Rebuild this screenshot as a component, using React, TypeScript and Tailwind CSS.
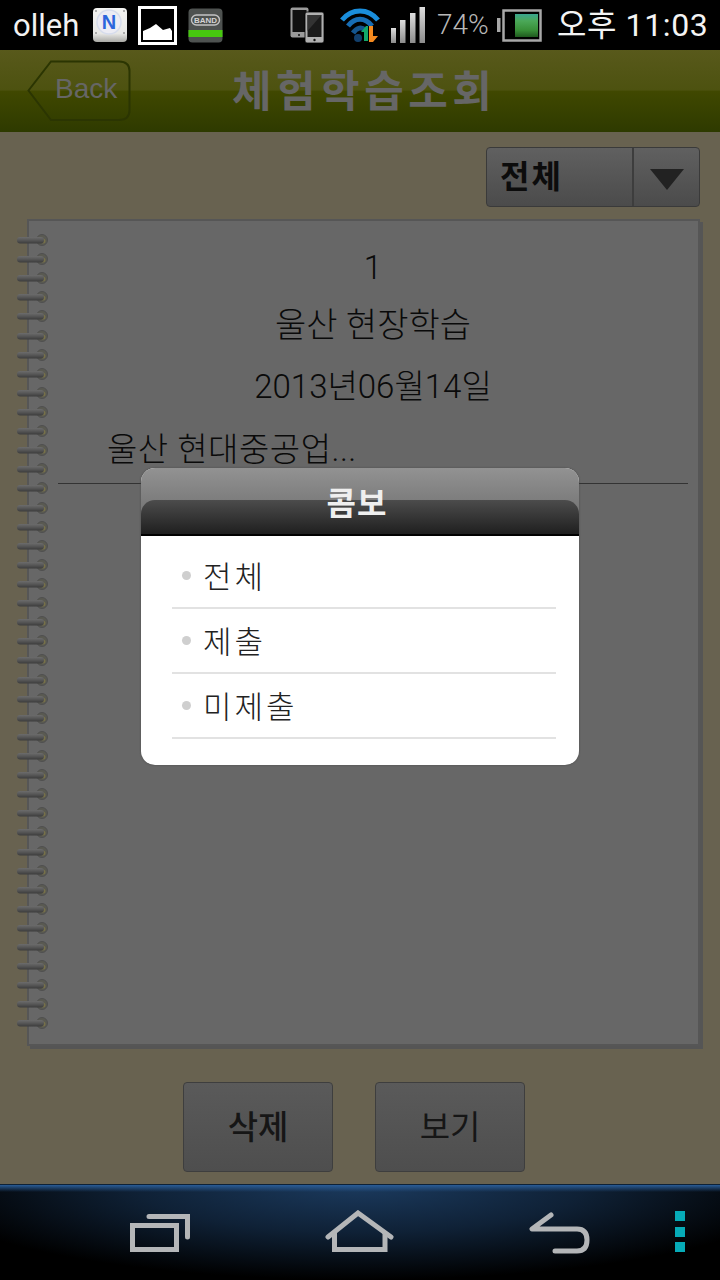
const rings = Array.from({ length: 42 }, (_, i) => i);
const comboItems = ["전체", "제출", "미제출"];

function NaverIcon() {
  return (
    <svg width="36" height="36" viewBox="0 0 36 36" className="shrink-0">
      <defs>
        <linearGradient id="nbg" x1="0" y1="0" x2="0" y2="1">
          <stop offset="0" stopColor="#f4f4f2" />
          <stop offset="0.75" stopColor="#e8e8e6" />
          <stop offset="1" stopColor="#a8a8a4" />
        </linearGradient>
      </defs>
      <rect x="1" y="1" width="34" height="34" rx="4" fill="url(#nbg)" />
      <circle cx="17" cy="15" r="12" fill="#ececf4" stroke="#d6dcec" strokeWidth="1.5" />
      <text x="17" y="22" textAnchor="middle" fontSize="20" fontWeight="700" fontFamily="Liberation Sans" fill="#2c66dc">N</text>
      <circle cx="4" cy="4" r="1" fill="#999" />
      <circle cx="32" cy="4" r="1" fill="#999" />
      <circle cx="4" cy="26" r="1" fill="#999" />
      <circle cx="32" cy="26" r="1" fill="#999" />
    </svg>
  );
}

function PictureIcon() {
  return (
    <svg width="39" height="39" viewBox="0 0 39 39" className="shrink-0">
      <rect x="1.5" y="1.5" width="36" height="36" fill="#000" stroke="#fff" strokeWidth="3" />
      <path d="M5 34 V25 L12 22 L18 18 L25 24 L32 22 L34 25 V34 Z" fill="#fff" />
    </svg>
  );
}

function BandIcon() {
  return (
    <svg width="35" height="35" viewBox="0 0 35 35" className="shrink-0">
      <rect x="0.5" y="0.5" width="34" height="34" rx="4" fill="#4e5250" />
      <rect x="3.5" y="7" width="28" height="10" rx="5" fill="none" stroke="#c4c4c4" strokeWidth="1.4" />
      <text x="17.5" y="15" textAnchor="middle" fontSize="8" fontWeight="700" fontFamily="Liberation Sans" fill="#d4d4d4">BAND</text>
      <rect x="0.5" y="22" width="34" height="7" fill="#47c80f" />
    </svg>
  );
}

function PhonesIcon() {
  return (
    <svg width="35" height="37" viewBox="0 0 35 37" className="shrink-0">
      <rect x="0.5" y="0.5" width="18" height="30" rx="2" fill="#9a9a9a" />
      <rect x="2.5" y="3" width="14" height="22" fill="#111" />
      <circle cx="9" cy="28" r="1" fill="#111" />
      <rect x="15" y="5" width="19" height="31" rx="2" fill="#b0b0b0" stroke="#000" strokeWidth="0.8" />
      <rect x="17.5" y="8" width="14" height="22" fill="#1a1a1a" />
      <path d="M17.5 8 H31.5 L17.5 24 Z" fill="#333" />
      <circle cx="24.5" cy="33" r="1.2" fill="#111" />
    </svg>
  );
}

function WifiIcon() {
  return (
    <svg width="40" height="38" viewBox="0 0 40 38" className="shrink-0">
      <path d="M2 14 C12 2 28 2 38 14" fill="none" stroke="#1a8edc" strokeWidth="5" />
      <path d="M8 20 C15 11 25 11 32 20" fill="none" stroke="#176db4" strokeWidth="5" />
      <path d="M13 27 C17 21 22 21 25 24" fill="none" stroke="#14558e" strokeWidth="5" />
      <circle cx="18" cy="32" r="4" fill="#123f6c" />
      <path d="M26 20 L21 26 H24 V35 H28 V20 Z" fill="#12a86a" />
      <path d="M29 20 H33 V30 H38 L33 36 H29 Z" fill="#f58a1f" />
    </svg>
  );
}

function SignalIcon() {
  return (
    <svg width="36" height="37" viewBox="0 0 36 37" className="shrink-0">
      <defs>
        <linearGradient id="sig" x1="0" y1="0" x2="0" y2="1">
          <stop offset="0" stopColor="#dedede" />
          <stop offset="1" stopColor="#8c8c8c" />
        </linearGradient>
      </defs>
      <rect x="1" y="21" width="5" height="15" fill="url(#sig)" />
      <rect x="10" y="13" width="5.5" height="23" fill="url(#sig)" />
      <rect x="20" y="6" width="5.5" height="30" fill="url(#sig)" />
      <rect x="29.5" y="0" width="5.5" height="36" fill="url(#sig)" />
    </svg>
  );
}

function BatteryIcon() {
  return (
    <svg width="45" height="33" viewBox="0 0 45 33" className="shrink-0">
      <defs>
        <linearGradient id="bat" x1="0" y1="0" x2="0" y2="1">
          <stop offset="0" stopColor="#3aa58f" />
          <stop offset="0.3" stopColor="#4ba858" />
          <stop offset="0.7" stopColor="#388f38" />
          <stop offset="1" stopColor="#1f5a1f" />
        </linearGradient>
      </defs>
      <rect x="0" y="9" width="3.5" height="14" fill="#a8a8a8" />
      <rect x="6.5" y="1.5" width="37" height="30" fill="#000" stroke="#a8a8a8" strokeWidth="2.5" />
      <rect x="18" y="5" width="23" height="23" fill="url(#bat)" />
    </svg>
  );
}

function RecentsIcon() {
  return (
    <svg width="64" height="44" viewBox="0 0 64 44" className="shrink-0" fill="none" stroke="#b4b6b8" strokeWidth="5">
      <rect x="4.5" y="15.5" width="44" height="24" />
      <path d="M21 6.5 H59.5 V27" strokeLinecap="round" />
    </svg>
  );
}

function HomeIcon() {
  return (
    <svg width="70" height="44" viewBox="0 0 70 44" className="shrink-0" fill="none" stroke="#b4b6b8" strokeWidth="5">
      <path d="M3 27 L33 3 L66 27" strokeLinecap="round" strokeLinejoin="miter" />
      <path d="M9.5 22 V39.5 H60 V22" />
    </svg>
  );
}

function BackIcon() {
  return (
    <svg width="62" height="44" viewBox="0 0 62 44" className="shrink-0" fill="none" stroke="#b4b6b8" strokeWidth="5" strokeLinecap="round" strokeLinejoin="round">
      <path d="M22 5 L3 19 H48 Q58 19 58 30 Q58 41 48 41 H26" />
    </svg>
  );
}

function Ring() {
  return (
    <svg width="31" height="12" viewBox="0 0 31 12" className="shrink-0">
      <defs>
        <linearGradient id="ring" x1="0" y1="0" x2="0" y2="1">
          <stop offset="0" stopColor="#6c6c6c" />
          <stop offset="0.5" stopColor="#565656" />
          <stop offset="1" stopColor="#3c3c3c" />
        </linearGradient>
      </defs>
      <circle cx="25" cy="6" r="5.5" fill="#5a5a52" stroke="#505050" />
      <circle cx="26" cy="7" r="2.5" fill="#77714a" />
      <rect x="0" y="3" width="27" height="6.5" rx="3.2" fill="url(#ring)" />
    </svg>
  );
}

export default function App() {
  return (
    <div className="w-[720px] h-[1280px] relative overflow-hidden flex flex-col bg-[#686250] font-['Roboto','Noto_Sans_CJK_KR',sans-serif]">
      {/* status bar */}
      <div className="h-[50px] shrink-0 bg-black flex items-center pl-[13px]">
        <span className="w-[67px] text-[31px] leading-none text-[#f2f2f2]">olleh</span>
        <div className="ml-[12px]"><NaverIcon /></div>
        <div className="ml-[10px]"><PictureIcon /></div>
        <div className="ml-[11px]"><BandIcon /></div>
        <div className="ml-[67px]"><PhonesIcon /></div>
        <div className="ml-[15px]"><WifiIcon /></div>
        <div className="ml-[10px]"><SignalIcon /></div>
        <span className="ml-[11px] w-[60px] text-[28px] font-light leading-none text-[#b8b8b8]">74%</span>
        <BatteryIcon />
        <span className="ml-[15px] text-[32px] tracking-[0.6px] leading-none text-[#f4f4f4] whitespace-nowrap">오후 11:03</span>
      </div>

      {/* title bar */}
      <div className="h-[82px] shrink-0 flex items-center pl-[27px] bg-[linear-gradient(to_bottom,#58591b_0%,#4d5210_49%,#404800_50%,#2e3a00_100%)]">
        <div className="relative w-[104px] h-[62px] flex items-center pl-[28px] pb-[4px] text-[28px] text-[#666] font-['Liberation_Sans',sans-serif]">
          <svg width="104" height="62" viewBox="0 0 104 62" className="absolute inset-0" fill="none">
            <path d="M1.5 30.5 L24 1.5 H92 Q102.5 1.5 102.5 11 V50 Q102.5 60 92 60 H24 Z" stroke="#2b3502" strokeWidth="2" />
          </svg>
          Back
        </div>
        <h1 className="ml-[101px] pt-[2px] text-[43px] font-bold leading-none tracking-[4.5px] text-[#666] whitespace-nowrap">체험학습조회</h1>
      </div>

      {/* content */}
      <div className="flex-1 flex flex-col pt-[15px]">
        <div className="self-end mr-[20px] w-[214px] h-[60px] flex rounded-[4px] border border-[#3a3a3a] bg-[linear-gradient(to_bottom,#606060,#4b4b4b)]">
          <div className="w-[147px] flex items-center pl-[13px] text-[32px] font-bold tracking-[2px] text-[#0c0c0c] border-r-2 border-[#3d3d3d]">전체</div>
          <div className="flex-1 flex items-center justify-center pt-[4px]">
            <svg width="36" height="22" viewBox="0 0 36 22"><path d="M1 1 H35 L18 22 Z" fill="#222" /></svg>
          </div>
        </div>

        <div className="relative ml-[27px] mt-[12px] w-[673px] h-[827px] border-2 border-[#565656] bg-[#676767] shadow-[3px_3px_0_#555]">
          <div className="absolute left-[-12px] top-[13px] h-[796px] flex flex-col justify-between">
            {rings.map((i) => (
              <Ring key={i} />
            ))}
          </div>
          <div className="ml-[29px] mr-[10px] pt-[22px] text-[#0a0a0a] font-light border-b border-[#333] h-[263px]">
            <div className="h-[50px] flex items-center justify-center text-[33px]">1</div>
            <div className="h-[60px] flex items-center justify-center pt-[4px] text-[34px]">울산 현장학습</div>
            <div className="h-[66px] flex items-center justify-center pt-[2px] text-[33px]">2013년06월14일</div>
            <div className="h-[62px] flex items-center pl-[49px] text-[33px] tracking-[0.5px]">울산 현대중공업...</div>
          </div>
        </div>

        <div className="flex gap-[42px] pl-[183px] mt-[36px]">
          <button className="w-[150px] h-[90px] pt-[2px] rounded-[4px] border border-[#3e3e3e] bg-[linear-gradient(to_bottom,#5a5a5a,#4e4e4e)] text-[33px] font-medium text-[#161616]">삭제</button>
          <button className="w-[150px] h-[90px] pt-[2px] rounded-[4px] border border-[#3e3e3e] bg-[linear-gradient(to_bottom,#5a5a5a,#4e4e4e)] text-[33px] text-[#161616]">보기</button>
        </div>
      </div>

      {/* nav bar */}
      <div className="relative h-[96px] shrink-0 border-t border-[#0e2238] flex items-start pl-[128px] pt-[25px] bg-[radial-gradient(ellipse_62%_100%_at_50%_0%,#1b3a5e_0%,#0f2136_50%,#000_100%)]">
        <div className="absolute left-0 right-0 top-0 h-[7px] bg-[linear-gradient(to_bottom,#2a5c96,transparent)]" />
        <RecentsIcon />
        <div className="ml-[133px]"><HomeIcon /></div>
        <div className="ml-[134px]"><BackIcon /></div>
        <div className="ml-[84px] pt-[1px] flex flex-col gap-[5.5px]">
          <div className="w-[10px] h-[10px] bg-[#06abb8]" />
          <div className="w-[10px] h-[10px] bg-[#06abb8]" />
          <div className="w-[10px] h-[10px] bg-[#06abb8]" />
        </div>
      </div>

      {/* combo dialog */}
      <div className="absolute left-[141px] top-[468px] w-[438px] h-[297px] rounded-[14px] overflow-hidden bg-white shadow-[0_0_2px_#444]">
        <div className="relative h-[68px] bg-[linear-gradient(to_bottom,#929292,#666)]">
          <div className="absolute left-0 right-0 bottom-0 h-[36px] rounded-t-[14px] border-b-2 border-black bg-[linear-gradient(to_bottom,#4c4c4c,#1f1f1f)]" />
          <div className="absolute inset-0 flex items-center justify-center pt-[4px] pr-[6px] text-[32px] font-bold tracking-[1px] text-[#efefef]">콤보</div>
        </div>
        <div className="pt-[8px] pl-[31px] pr-[23px]">
          {comboItems.map((item) => (
            <div key={item} className="h-[65px] flex items-center border-b-2 border-[#e2e2e2] pl-[10px] text-[31px] font-light tracking-[3px] text-[#222]">
              <span className="w-[9px] h-[9px] rounded-full bg-[#cfcfcf] mr-[12px]" />
              <span className="pt-[5px]">{item}</span>
            </div>
          ))}
        </div>
      </div>
    </div>
  );
}
